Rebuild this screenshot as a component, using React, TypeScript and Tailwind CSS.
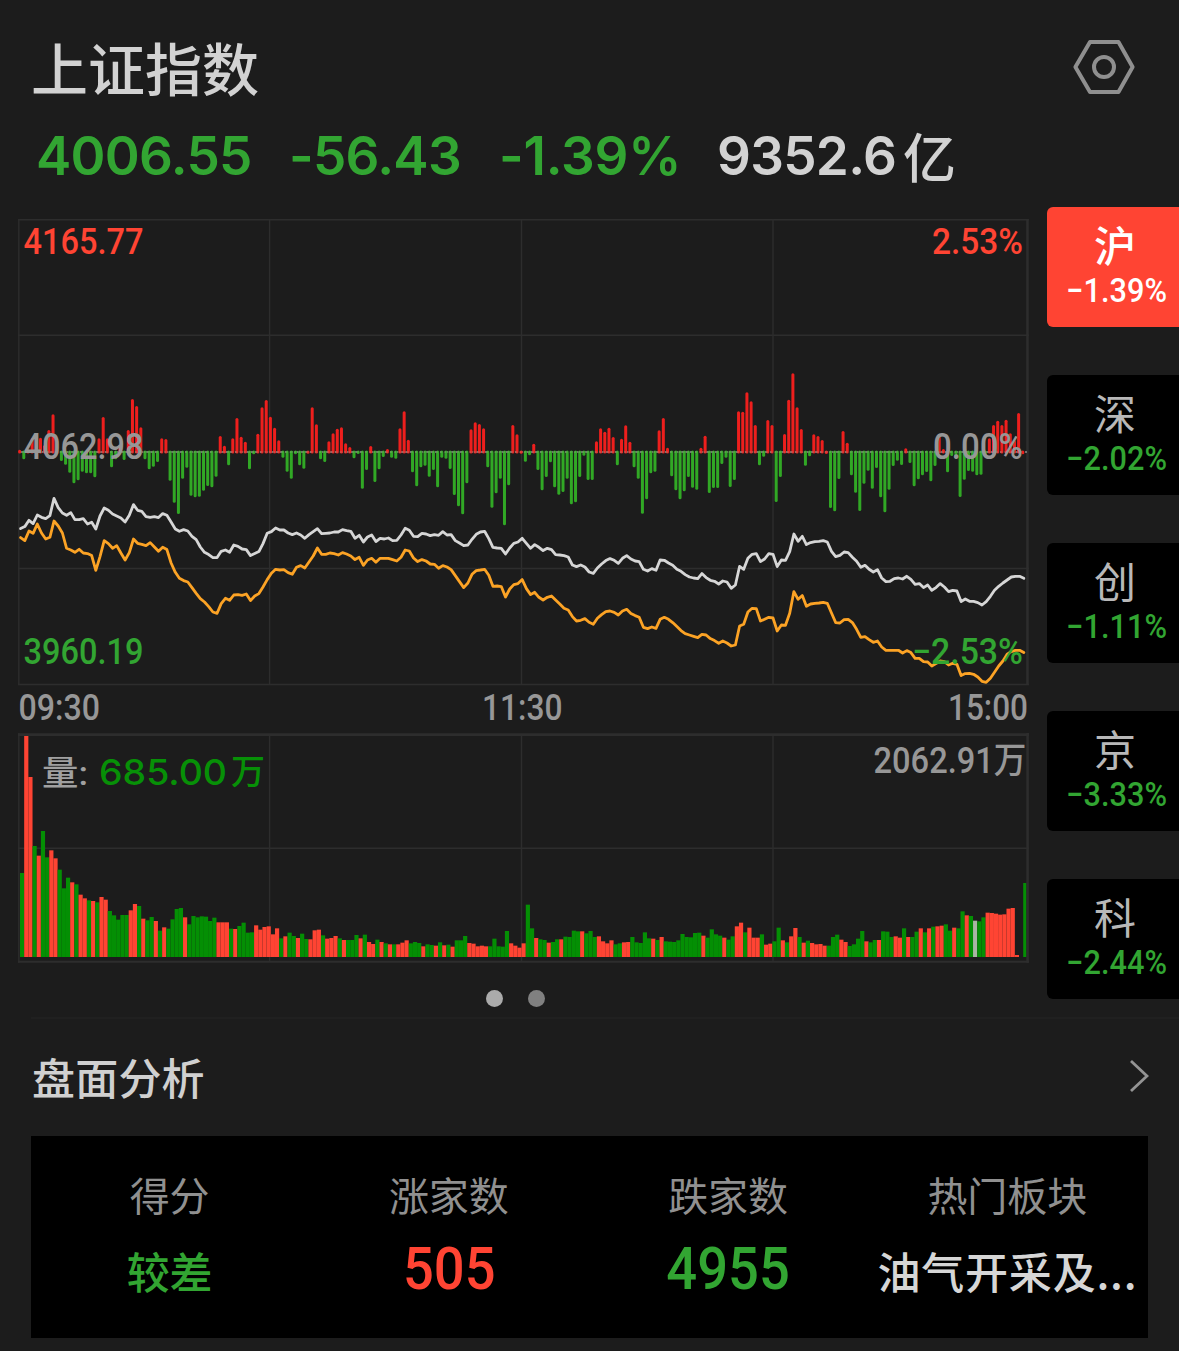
import React from "react";

const BASE = 452;
const STEP = 4.18;

// Momentum histogram, one value per minute, in thirds of a pixel.
const momentum = [
  0, -20, 0, 40, 45, 42, 20, 65, 112, 2, -25, -36, -60, -92, -83, -57, -62, -62, -74, 40,
  104, 40, -44, -20, 20, -22, 65, 158, 137, 73, -20, -50, -42, -28, 40, 38, -84, -150, -184, -78,
  -45, -129, -134, -132, -114, -100, -104, -72, 47, 18, -38, 40, 101, 45, 30, -50, -5, 54, 133, 155,
  105, 72, 34, -15, -57, -78, -5, -38, -48, 3, 133, 82, -20, -28, 31, 55, 69, 73, 25, 14,
  -17, -4, -108, -52, 17, -88, -50, -13, 8, -15, -18, 70, 121, 36, -59, -101, -44, -39, -72, -52,
  -104, -15, -18, -49, -127, -161, -185, -92, 67, 88, 83, 70, -44, -165, -122, -78, -218, -98, 80, 52,
  3, -27, -8, 24, -52, -113, -73, -29, -104, -126, -118, -78, -155, -149, -73, -9, -82, -82, 31, 70,
  60, 72, 44, -38, 39, 79, 30, -44, -78, -183, -140, -62, -57, 64, 101, 12, -71, -113, -140, -116,
  -73, -105, -111, 12, 48, -121, -106, -106, -34, -15, -103, -82, 121, 120, 178, 151, 80, -38, -12, 95,
  80, -148, -73, 53, 156, 235, 133, 68, -39, -11, 52, 47, 35, 2, -166, -176, -79, 62, 27, -68,
  -120, -175, -93, -54, -108, -46, -134, -179, -111, -40, -24, -37, 10, -31, -101, -80, -68, -58, -86, -40,
  50, 8, -59, -10, -18, -133, -81, -55, -57, -68, -66, -10, 40, 80, 93, 80, 96, 55, 35, 116, 1,
];

// Line depths below y = 360, in thirds of a pixel.
const indexLine = [
  505, 499, 480, 490, 464, 471, 475, 466, 414, 442, 458, 465, 457, 478, 478, 475, 491, 486, 506, 467,
  443, 450, 461, 467, 473, 485, 465, 433, 450, 453, 469, 471, 469, 472, 460, 465, 485, 506, 513, 508,
  512, 528, 538, 560, 576, 583, 592, 592, 573, 569, 576, 554, 558, 566, 568, 586, 580, 574, 550, 519,
  514, 503, 509, 509, 518, 523, 518, 524, 534, 523, 514, 505, 520, 519, 518, 515, 515, 508, 511, 513,
  534, 525, 545, 530, 524, 544, 534, 536, 533, 541, 540, 524, 504, 510, 528, 529, 519, 521, 526, 523,
  525, 514, 524, 523, 541, 548, 556, 554, 537, 522, 515, 513, 535, 561, 563, 564, 581, 563, 549, 545,
  534, 549, 564, 553, 561, 571, 564, 568, 583, 584, 586, 590, 614, 619, 614, 620, 635, 639, 623, 611,
  601, 595, 600, 609, 594, 586, 596, 602, 604, 627, 632, 625, 630, 599, 600, 608, 615, 627, 633, 643,
  650, 653, 655, 640, 652, 660, 663, 671, 662, 665, 684, 674, 618, 627, 594, 582, 580, 604, 596, 580,
  582, 619, 599, 600, 574, 521, 543, 528, 553, 547, 544, 543, 541, 545, 573, 589, 585, 575, 577, 591,
  603, 621, 615, 627, 635, 628, 653, 664, 663, 655, 653, 656, 648, 657, 672, 670, 682, 674, 690, 682,
  670, 680, 694, 690, 692, 724, 716, 723, 723, 727, 734, 724, 708, 690, 678, 668, 659, 650, 648, 648, 654,
];

const averageLine = [
  532, 541, 512, 519, 491, 518, 536, 531, 482, 497, 518, 564, 569, 576, 567, 578, 580, 586, 630, 589,
  541, 550, 564, 556, 578, 599, 577, 536, 549, 552, 556, 547, 560, 573, 561, 568, 608, 636, 654, 661,
  665, 682, 699, 715, 725, 739, 755, 759, 730, 714, 720, 704, 703, 705, 701, 721, 707, 700, 680, 658,
  639, 627, 629, 628, 637, 642, 621, 616, 623, 605, 587, 563, 582, 582, 578, 580, 584, 577, 581, 587,
  598, 591, 615, 599, 594, 606, 594, 594, 594, 598, 602, 591, 569, 572, 593, 604, 598, 602, 611, 612,
  624, 616, 620, 628, 646, 664, 682, 668, 642, 631, 629, 627, 645, 678, 677, 679, 710, 686, 673, 670,
  658, 685, 703, 696, 711, 719, 711, 707, 719, 731, 744, 749, 769, 782, 780, 775, 786, 792, 774, 763,
  754, 752, 756, 764, 752, 747, 760, 766, 771, 801, 805, 800, 804, 777, 771, 777, 787, 799, 811, 820,
  824, 828, 832, 822, 824, 835, 841, 849, 842, 848, 857, 854, 797, 792, 755, 744, 745, 782, 777, 771,
  773, 812, 794, 795, 759, 694, 717, 706, 738, 731, 729, 728, 726, 729, 758, 787, 788, 778, 777, 787,
  807, 831, 829, 838, 846, 842, 860, 870, 870, 870, 870, 878, 871, 877, 894, 894, 904, 905, 917, 910,
  902, 904, 914, 909, 912, 946, 940, 939, 942, 950, 963, 966, 954, 936, 917, 902, 882, 874, 870, 870, 877,
];

// Volume per minute: positive closes up (red), negative closes down (green).
const FLAT_MINUTE = 228;
const volume = [
  -252, 663, 540, -333, 304, -378, -299, 320, 296, -262, -206, -238, 224, -218, 187, 176, -170, 168, -164, 180,
  172, -138, -125, -112, -126, -126, 140, 159, -153, 115, -110, -120, 108, -79, 89, -85, -113, -144, -147, 119,
  -98, -123, -119, -122, -121, -108, -118, 104, 104, 104, -85, 84, -93, -103, -73, -74, 95, 82, 90, 92,
  68, 86, -56, 62, -73, -63, 57, -70, -54, 53, 80, 82, -65, 55, 57, 63, -56, 51, -51, -51,
  -66, 56, -67, 45, 39, -52, 45, -41, 38, -38, 38, 43, 50, -41, -45, -42, 32, -38, -36, 34,
  -44, 35, -37, 31, -50, -50, -63, 42, 40, 32, 34, 32, -32, -55, -32, -31, -78, 41, 34, 28,
  41, -157, -86, 57, -53, -51, 43, -45, -53, 53, -61, -60, -79, -77, 77, -71, -78, -60, 62, 47,
  41, 50, -38, -41, 44, 45, -60, -44, -42, -74, -56, 55, -51, 60, -47, -46, -45, -50, -69, -60,
  -59, -72, -73, 64, -58, -83, -68, -64, 58, -52, -62, 92, 103, -74, 88, 58, 58, -68, 37, 40,
  -47, -88, 50, -44, 62, 87, -60, 43, -49, 42, 38, 39, 34, -34, -60, -67, 52, 45, -33, -38,
  -55, -78, 47, -44, -51, 51, -77, -76, -60, 62, 58, -86, 60, -60, -76, 86, -74, 86, -91, 92,
  94, -98, -79, 88, -86, -137, 125, -123, 109, -107, -119, 133, 132, 130, 127, 128, 145, 147, 6, 0, -222,
];

const toPoints = (ys: number[]) =>
  ys.map((y, i) => `${(20.6 + STEP * i).toFixed(1)},${(360.3 + y / 3).toFixed(1)}`).join(" ");

const GRID = "#2d2d2d";

type LabelProps = { x: number; y: number; w: number; fill: string; size?: number; children: string };

function ChartLabel({ x, y, w, fill, size = 36, children }: LabelProps) {
  return (
    <text x={x} y={y} fontSize={size} fill={fill} textLength={w} lengthAdjust="spacingAndGlyphs" className="font-['Roboto','Noto_Sans_CJK_SC',sans-serif] font-medium">
      {children}
    </text>
  );
}

function PriceChart() {
  return (
    <svg className="block" width="1011" height="467" viewBox="18 219 1011 467">
      <g stroke={GRID} strokeWidth="1.4">
        <path d="M18 219.7H1029M18 335.3H1029M18 568.5H1029M18 684.5H1029" />
        <path d="M18.8 219V685M269.6 219V685M521.5 219V685M773 219V685" />
        <path d="M1027.5 219V685" strokeWidth="2.6" />
      </g>
      <path d="M20 452H1027" stroke="#8a8a8a" strokeWidth="1.4" strokeDasharray="3 2" />
      {momentum.map((v, i) => {
        const x = 19.6 + STEP * i;
        return (
          <line
            key={i}
            x1={x}
            x2={x}
            y1={BASE}
            y2={BASE - v / 3 + (v > 0 ? 1.2 : -0.8)}
            stroke={v >= 0 ? "#ee1f1d" : "#31a825"}
            strokeWidth="3"
            strokeLinecap="round"
          />
        );
      })}
      <path d="M22 452H1020" stroke="#a0a090" strokeOpacity="0.6" strokeWidth="1.2" strokeDasharray="2.2 1.98" />
      <polyline points={toPoints(averageLine)} fill="none" stroke="#fca325" strokeWidth="2.8" strokeLinejoin="round" strokeLinecap="round" />
      <polyline points={toPoints(indexLine)} fill="none" stroke="#d6d6d6" strokeWidth="2.8" strokeLinejoin="round" strokeLinecap="round" />
      <ChartLabel x={23.5} y={254} w={120} fill="#ff4433">4165.77</ChartLabel>
      <ChartLabel x={932} y={254} w={91} fill="#ff4433">2.53%</ChartLabel>
      <ChartLabel x={23.5} y={458.5} w={120} fill="#979797">4062.98</ChartLabel>
      <ChartLabel x={933} y={458.5} w={90} fill="#979797">0.00%</ChartLabel>
      <ChartLabel x={23.5} y={663.5} w={120} fill="#32a532">3960.19</ChartLabel>
      <ChartLabel x={912} y={663.5} w={111} fill="#32a532">−2.53%</ChartLabel>
    </svg>
  );
}

function TimeAxis() {
  return (
    <svg className="block overflow-visible" width="1011" height="47" viewBox="18 686 1011 47">
      <ChartLabel x={18.5} y={720} w={81.5} fill="#979797">09:30</ChartLabel>
      <ChartLabel x={482} y={720} w={80.5} fill="#979797">11:30</ChartLabel>
      <ChartLabel x={948} y={720} w={80} fill="#979797">15:00</ChartLabel>
    </svg>
  );
}

function VolumeChart() {
  return (
    <svg className="block" width="1011" height="231" viewBox="18 733 1011 231">
      <g stroke={GRID} strokeWidth="1.4">
        <path d="M18 848.2H1029" />
        <path d="M18.8 733V963M269.6 735V961M521.5 735V961M773 735V961" />
        <path d="M18 734.6H1029M1027.6 733V963" strokeWidth="2.6" />
        <path d="M18 961.8H1029" strokeWidth="2" />
      </g>
      {volume.map((v, i) => {
        const h = Math.abs(v) / 3;
        return (
          <rect
            key={i}
            x={20 + STEP * i}
            y={957 - h}
            width={i === volume.length - 1 ? 3 : STEP}
            height={h}
            fill={i === FLAT_MINUTE ? "#a9b5a3" : v > 0 ? "#ff4433" : "#048f04"}
          />
        );
      })}
      <ChartLabel x={42} y={784.5} w={46} size={34} fill="#a0a0a0">量:</ChartLabel>
      <text x={99} y={784.5} fontSize="36" fill="#079007" textLength="128" lengthAdjust="spacingAndGlyphs" className="font-['Inter',sans-serif] font-medium">685.00</text>
      <text x={231} y={784} fontSize="34" fill="#079007" className="font-['Noto_Sans_CJK_SC',sans-serif] font-medium">万</text>
      <ChartLabel x={873.5} y={773} w={153} fill="#979797">2062.91万</ChartLabel>
    </svg>
  );
}

const markets = [
  { name: "沪", change: "−1.39%", active: true },
  { name: "深", change: "−2.02%" },
  { name: "创", change: "−1.11%" },
  { name: "京", change: "−3.33%" },
  { name: "科", change: "−2.44%" },
];

function MarketTabs() {
  return (
    <div className="flex w-[132px] flex-col gap-12">
      {markets.map((m) => (
        <button
          key={m.name}
          className={
            m.active
              ? "flex h-[120px] flex-col items-center rounded-l-md bg-[#ff4433] pt-[15px] pl-1 font-medium text-white"
              : "flex h-[120px] flex-col items-center rounded-l-md bg-black pt-[15px] pl-1 font-medium text-[#32a532]"
          }
        >
          <span className={m.active ? "text-[42px] leading-[44px]" : "text-[42px] leading-[44px] font-normal text-[#b8b8b8]"}>{m.name}</span>
          <span className="origin-center translate-x-[1.5px] scale-x-[0.93] font-['Roboto',sans-serif] text-[33px] leading-[50px] whitespace-nowrap">
            {m.change}
          </span>
        </button>
      ))}
    </div>
  );
}

const stats = [
  { label: "得分", value: "较差", tone: "text-[43px] text-[#32a532] font-medium" },
  { label: "涨家数", value: "505", tone: "text-[59px] text-[#ff4433] font-['Roboto',sans-serif] font-medium scale-x-[0.92] -translate-y-px" },
  { label: "跌家数", value: "4955", tone: "text-[59px] text-[#32a532] font-['Roboto',sans-serif] font-medium scale-x-[0.92] -translate-y-px" },
  { label: "热门板块", value: "油气开采及...", tone: "text-[43px] tracking-[0.8px] text-[#d6d6d6] font-medium" },
];

export default function App() {
  return (
    <div className="h-[1351px] w-[1179px] overflow-hidden bg-[#1c1c1c] font-['Noto_Sans_CJK_SC',sans-serif]">
      <header className="flex h-[207px] flex-col pt-[34px]">
        <div className="flex h-16 items-center justify-between pr-[43px] pl-[31px]">
          <h1 className="text-[57px] leading-[64px] font-medium text-[#d2d2d2]">上证指数</h1>
          <svg className="mt-0.5" width="64" height="58" viewBox="1072 38 64 58" fill="none" stroke="#8f8f8f" strokeWidth="4" strokeLinejoin="round">
            <path d="M1090 42H1118.5L1132.6 67L1118.5 92H1090L1075.4 67Z" />
            <circle cx="1104" cy="67" r="10" />
          </svg>
        </div>
        <div className="mt-[26px] flex h-16 items-center pl-9 font-['Inter',sans-serif] text-[53px] leading-[64px] font-semibold tracking-[-0.7px] whitespace-nowrap text-[#32a532]">
          <span className="w-[253px]">4006.55</span>
          <span className="w-[210px]">-56.43</span>
          <span className="w-[218px] tracking-[-0.2px]">-1.39%</span>
          <span className="text-[#d2d2d2]">9352.6</span>
          <span className="ml-[7px] -translate-y-px font-['Noto_Sans_CJK_SC',sans-serif] text-[53px] font-medium text-[#d2d2d2]">亿</span>
        </div>
      </header>

      <main className="flex h-[810px] justify-between">
        <section className="w-[1029px] pt-3 pl-[18px]">
          <PriceChart />
          <TimeAxis />
          <VolumeChart />
          <div className="mt-[26px] flex gap-[25px] pl-[468px]">
            <span className="size-[17px] rounded-full bg-[#ababab]" />
            <span className="size-[17px] rounded-full bg-[#808080]" />
          </div>
        </section>
        <MarketTabs />
      </main>

      <section className="ml-[31px] border-t-2 border-[#202020]">
        <div className="flex h-[117px] items-center justify-between pr-[30px] pb-[3px] pl-px">
          <h2 className="text-[43px] font-medium tracking-[0.2px] text-[#d0d0d0]">盘面分析</h2>
          <svg width="20" height="34" viewBox="0 0 20 34" fill="none" stroke="#949494" strokeWidth="2.8">
            <path d="M2 2L18 17L2 32" />
          </svg>
        </div>
        <div className="grid h-[202px] w-[1117px] grid-cols-4 bg-black pt-8">
          {stats.map((s) => (
            <div key={s.label} className="flex flex-col items-center pr-0.5 whitespace-nowrap">
              <span className="text-[40px] leading-[52px] text-[#909090]">{s.label}</span>
              <span className={`mt-[18px] leading-[64px] ${s.tone}`}>{s.value}</span>
            </div>
          ))}
        </div>
      </section>
    </div>
  );
}
